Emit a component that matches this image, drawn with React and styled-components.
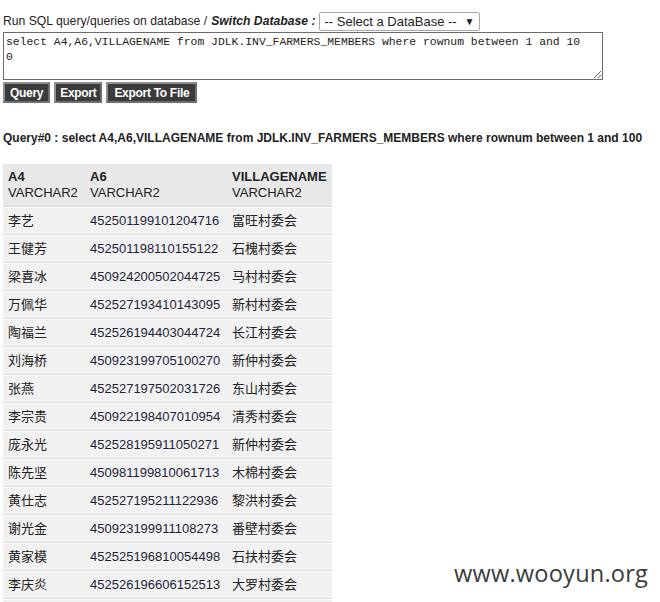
import React from "react";
import styled, { createGlobalStyle } from "styled-components";

const Global = createGlobalStyle`
  html, body { margin: 0; padding: 0; background: #fff; overflow: hidden; }
  body { font-family: "Liberation Sans", Arial, "Noto Sans CJK SC", sans-serif; color: #222; }
`;

const Page = styled.div`
  position: relative;
  padding: 11px 3px 0 3px;
  width: 654px;
  height: 591px;
  overflow: hidden;
  font-size: 13px;
`;

const TopLine = styled.div`
  display: flex;
  align-items: center;
  height: 20px;
  white-space: nowrap;
  font-size: 12.2px;
`;

const SwitchLabel = styled.b`
  font-style: italic;
  margin-left: 4px;
  margin-right: 4px;
`;

const Select = styled.div`
  display: flex;
  align-items: center;
  justify-content: space-between;
  box-sizing: border-box;
  width: 161px;
  height: 19px;
  border: 1px solid #a9a9a9;
  border-radius: 2px;
  padding: 0 5px 0 4px;
  font-size: 13px;
  background: #fff;
`;

const Arrow = styled.span`
  font-size: 10px;
`;

const Sql = styled.textarea`
  display: block;
  box-sizing: border-box;
  width: 600px;
  height: 48px;
  margin: 1px 0 0 0;
  padding-top: 2px;
  padding-bottom: 2px;
  padding-left: 2px;
  padding-right: 17px;
  border: 1px solid #6b6b6b;
  font-family: "Liberation Mono", "Courier New", monospace;
  font-size: 11.4px;
  line-height: 15px;
  color: #222;
  white-space: pre-wrap;
  word-break: break-all;
  overflow-wrap: anywhere;
  overflow: hidden;
  resize: both;
  outline: none;
`;

const Buttons = styled.div`
  display: flex;
  gap: 4px;
  margin-top: 2px;
`;

const Btn = styled.button`
  box-sizing: border-box;
  height: 21px;
  padding: 0 ${(p) => p.$pad || 4}px;
  background: #3b3b3b;
  color: #fff;
  border: 2px solid #8f8f8f;
  border-right-color: #6f6f6f;
  border-bottom-color: #6f6f6f;
  font-family: "Liberation Sans", Arial, sans-serif;
  font-weight: bold;
  font-size: 12px;
  letter-spacing: -0.3px;
  line-height: 16px;
  cursor: pointer;
`;

const QueryTitle = styled.div`
  margin-top: 28px;
  font-weight: bold;
  font-size: 12px;
  line-height: 14px;
  white-space: nowrap;
`;

const Table = styled.table`
  margin-top: 19px;
  border-collapse: separate;
  border-spacing: 0;
  font-size: 13px;
`;

const Th = styled.th`
  text-align: left;
  vertical-align: top;
  background: #e8e8e8;
  padding: 5px 5px 5px 5px;
  line-height: 16px;
  font-weight: normal;
  width: ${(p) => p.$w}px;
  border-bottom: 1px solid #d9d9d9;
`;

const ColName = styled.div`
  font-weight: bold;
`;

const Td = styled.td`
  background: #f1f1f1;
  padding: 6px 5px 6px 5px;
  line-height: 14px;
  border-top: 1px solid #fff;
  border-bottom: 1px solid #dcdcdc;
  white-space: nowrap;
  color: ${(p) => (p.$num ? "#1f1f3a" : "#222")};
  font-family: "Liberation Sans", Arial, "Noto Sans CJK SC", sans-serif;
`;

const Watermark = styled.div`
  position: absolute;
  left: 454px;
  top: 557px;
  font-family: "Open Sans", "Noto Sans", sans-serif;
  font-size: 23.6px;
  color: #3c3c3c;
  letter-spacing: 0.2px;
`;

const rows = [
  ["李艺", "452501199101204716", "富旺村委会"],
  ["王健芳", "452501198110155122", "石槐村委会"],
  ["梁喜冰", "450924200502044725", "马村村委会"],
  ["万佩华", "452527193410143095", "新村村委会"],
  ["陶福兰", "452526194403044724", "长江村委会"],
  ["刘海桥", "450923199705100270", "新仲村委会"],
  ["张燕", "452527197502031726", "东山村委会"],
  ["李宗贵", "450922198407010954", "清秀村委会"],
  ["庞永光", "452528195911050271", "新仲村委会"],
  ["陈先坚", "450981199810061713", "木棉村委会"],
  ["黄仕志", "452527195211122936", "黎洪村委会"],
  ["谢光金", "450923199911108273", "番壁村委会"],
  ["黄家模", "452525196810054498", "石扶村委会"],
  ["李庆炎", "452526196606152513", "大罗村委会"],
  ["", "", ""],
];

const sql =
  "select A4,A6,VILLAGENAME from JDLK.INV_FARMERS_MEMBERS where rownum between 1 and 100";

export default function App() {
  return (
    <Page>
      <Global />
      <TopLine>
        Run SQL query/queries on database /<SwitchLabel>Switch Database :</SwitchLabel>
        <Select>
          <span>-- Select a DataBase --</span>
          <Arrow>▼</Arrow>
        </Select>
      </TopLine>
      <Sql defaultValue={sql} spellCheck={false} />
      <Buttons>
        <Btn $pad={5}>Query</Btn>
        <Btn $pad={4}>Export</Btn>
        <Btn $pad={6}>Export To File</Btn>
      </Buttons>
      <QueryTitle>Query#0 : {sql}</QueryTitle>
      <Table>
        <thead>
          <tr>
            <Th $w={72}>
              <ColName>A4</ColName>VARCHAR2
            </Th>
            <Th $w={132}>
              <ColName>A6</ColName>VARCHAR2
            </Th>
            <Th $w={92}>
              <ColName>VILLAGENAME</ColName>VARCHAR2
            </Th>
          </tr>
        </thead>
        <tbody>
          {rows.map((r, i) => (
            <tr key={i}>
              <Td>{r[0] || "\u00a0"}</Td>
              <Td $num>{r[1]}</Td>
              <Td>{r[2]}</Td>
            </tr>
          ))}
        </tbody>
      </Table>
      <Watermark>www.wooyun.org</Watermark>
    </Page>
  );
}
